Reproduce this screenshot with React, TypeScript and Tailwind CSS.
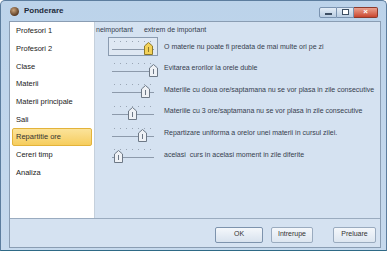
import React from "react";

const menu = [
  "Profesori 1",
  "Profesori 2",
  "Clase",
  "Materii",
  "Materii principale",
  "Sali",
  "Repartitie ore",
  "Cereri timp",
  "Analiza",
];

const rules = [
  { text: "O materie nu poate fi predata de mai multe ori pe zi", pos: 35, active: true },
  { text: "Evitarea erorilor la orele duble", pos: 40 },
  { text: "Materiile cu doua ore/saptamana nu se vor plasa in zile consecutive", pos: 32 },
  { text: "Materiile cu 3 ore/saptamana nu se vor plasa in zile consecutive", pos: 19 },
  { text: "Repartizare uniforma a orelor unei materii in cursul zilei.", pos: 29 },
  { text: "acelasi  curs in acelasi moment in zile diferite", pos: 5 },
];

function Slider({ pos, active }: { pos: number; active?: boolean }) {
  return (
    <div
      className={`relative h-[19px] w-[50px] ${
        active ? "border border-[#8a9bb0] bg-[#dfe8f3]" : "border border-transparent"
      }`}
    >
      <div className="absolute left-[5px] top-[3px] flex gap-[5px]">
        {[0, 1, 2, 3, 4, 5, 6].map((i) => (
          <div key={i} className="h-[1px] w-[1px] bg-[#9aa6b5]" />
        ))}
      </div>
      <div className="absolute left-[3px] right-[3px] top-[11px] h-[1px] bg-[#8d9aab]" />
      <svg
        className="absolute top-[4px]"
        style={{ left: pos }}
        width="9"
        height="13"
        viewBox="0 0 9 13"
      >
        <path
          d="M0.5 12.5 V4 L4.5 0.5 L8.5 4 V12.5 Z"
          fill={active ? "#f3d25a" : "#eef1f5"}
          stroke={active ? "#8f7a2a" : "#6d7886"}
        />
        <line x1="4.5" y1="5" x2="4.5" y2="10" stroke={active ? "#8f7a2a" : "#6d7886"} />
      </svg>
    </div>
  );
}

export default function App() {
  return (
    <div
      className="relative h-[254px] w-[387px] overflow-hidden bg-[#ffffff]"
      style={{ fontFamily: '"Liberation Sans", Arial, sans-serif' }}
    >
      <div className="flex h-[251px] w-[387px] flex-col rounded-t-[5px] border border-[#5c7d9e] border-b-[#2e6a86] bg-gradient-to-b from-[#bcd3ea] to-[#c6d9ed] pb-[2px] pl-[8px] pr-[5px]">
        {/* title bar */}
        <div className="flex h-[20px] shrink-0 items-center">
          <div className="ml-[1px] h-[9px] w-[9px] rounded-full bg-[radial-gradient(circle_at_40%_35%,#c9a37a,#5a3a22_70%)]" />
          <span className="ml-[5px] text-[8px] font-bold text-[#1e2b3a]">Ponderare</span>
          <div className="ml-auto mr-[3px] mt-[2px] flex">
            <div className="flex h-[11px] w-[18px] items-center justify-center rounded-l-[2px] border border-[#7a93b0] bg-gradient-to-b from-[#e3ecf6] to-[#b9cde2]">
              <div className="mt-[3px] h-[2px] w-[7px] border border-[#3d4f64] bg-white" />
            </div>
            <div className="flex h-[11px] w-[17px] items-center justify-center border border-l-0 border-[#7a93b0] bg-gradient-to-b from-[#e3ecf6] to-[#b9cde2]">
              <div className="h-[6px] w-[7px] border border-[#3d4f64] bg-white" />
            </div>
            <div className="flex h-[11px] w-[24px] items-center justify-center rounded-r-[2px] border border-l-0 border-[#8c3a2c] bg-gradient-to-b from-[#e9a08e] to-[#c9452e] text-[8px] font-bold leading-none text-white">
              ×
            </div>
          </div>
        </div>

        {/* client */}
        <div className="flex flex-1 flex-col border border-[#8a9db3] bg-[#d5e2f1]">
          <div className="flex flex-1">
            <div className="w-[85px] border-r border-[#c5d0dc] bg-white px-[2px]">
              {menu.map((m) => (
                <div
                  key={m}
                  className={`flex h-[17.7px] items-center pl-[3px] text-[7.5px] ${
                    m === "Repartitie ore"
                      ? "rounded-[2px] border border-[#e3b33a] bg-gradient-to-b from-[#fbe39a] to-[#f6cd5c] text-[#333]"
                      : "border border-transparent text-[#222]"
                  }`}
                >
                  {m}
                </div>
              ))}
            </div>
            <div className="flex-1 pl-[1px] pt-[3px] text-[7px] text-[#35404e]">
              <div className="flex h-[11px] items-center gap-[11px]">
                <span>neimportant</span>
                <span>extrem de important</span>
              </div>
              <div className="flex flex-col">
                {rules.map((r) => (
                  <div key={r.text} className="flex h-[21.6px] items-center">
                    <div className="ml-[12px] mr-[6px]">
                      <Slider pos={r.pos} active={r.active} />
                    </div>
                    <span className="whitespace-pre">{r.text}</span>
                  </div>
                ))}
              </div>
            </div>
          </div>
          <div className="flex h-[29px] shrink-0 items-center justify-end gap-[8px] border-t border-[#9aabbf] pr-[4px] pt-[3px]">
            <button className="h-[16px] w-[48px] rounded-[2px] border border-[#7d93ad] bg-gradient-to-b from-[#f4f7fb] to-[#d8e2ee] text-[7px] text-[#333]">
              OK
            </button>
            <button className="h-[16px] w-[42px] rounded-[2px] border border-[#9aabbf] bg-gradient-to-b from-[#f4f7fb] to-[#dde6f0] text-[7px] text-[#333]">
              Intrerupe
            </button>
            <button className="ml-[12px] h-[16px] w-[43px] rounded-[2px] border border-[#9aabbf] bg-gradient-to-b from-[#f4f7fb] to-[#dde6f0] text-[7px] text-[#333]">
              Preluare
            </button>
          </div>
        </div>
      </div>
    </div>
  );
}
